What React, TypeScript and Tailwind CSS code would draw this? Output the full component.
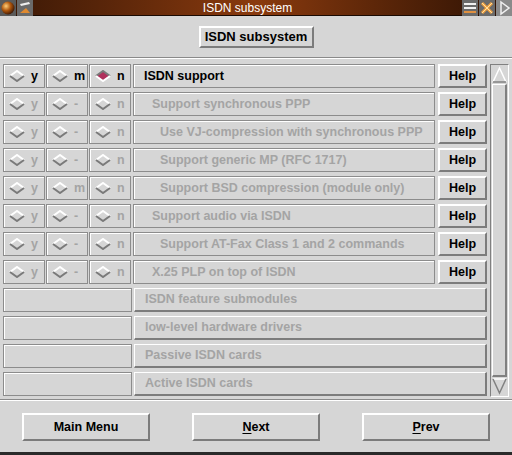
import React from "react";

const FONT = { fontFamily: '"Liberation Sans", Arial, Helvetica, sans-serif' };

interface Row {
  label: string;
  indent: number;
  enabled: boolean;
  m: string;
  value: "y" | "m" | "n";
}

const ROWS: Row[] = [
  { label: "ISDN support", indent: 10, enabled: true, m: "m", value: "n" },
  { label: "Support synchronous PPP", indent: 18, enabled: false, m: "-", value: "n" },
  { label: "Use VJ-compression with synchronous PPP", indent: 26, enabled: false, m: "-", value: "n" },
  { label: "Support generic MP (RFC 1717)", indent: 26, enabled: false, m: "-", value: "n" },
  { label: "Support BSD compression (module only)", indent: 26, enabled: false, m: "m", value: "n" },
  { label: "Support audio via ISDN", indent: 18, enabled: false, m: "-", value: "n" },
  { label: "Support AT-Fax Class 1 and 2 commands", indent: 26, enabled: false, m: "-", value: "n" },
  { label: "X.25 PLP on top of ISDN", indent: 18, enabled: false, m: "-", value: "n" },
];

const SUBMENUS = [
  "ISDN feature submodules",
  "low-level hardware drivers",
  "Passive ISDN cards",
  "Active ISDN cards",
];

const Diamond: React.FC<{ on: boolean }> = ({ on }) => (
  <svg width="16" height="12" viewBox="0 0 16 12" className="flex-shrink-0">
    <polygon points="8,1 15,6 8,11 1,6" fill={on ? "#b0305c" : "#d6d6d6"} />
    {on ? (
      <>
        <polyline points="1,6 8,1 15,6" fill="none" stroke="#7a7a7a" strokeWidth="2" />
        <polyline points="1,6 8,11 15,6" fill="none" stroke="#ffffff" strokeWidth="2" />
      </>
    ) : (
      <>
        <polyline points="1,6 8,1 15,6" fill="none" stroke="#ffffff" strokeWidth="2" />
        <polyline points="1,6 8,11 15,6" fill="none" stroke="#7a7a7a" strokeWidth="2" />
      </>
    )}
  </svg>
);

const RadioBox: React.FC<{ letter: string; on: boolean; enabled: boolean }> = ({ letter, on, enabled }) => (
  <div className="w-[42px] h-full flex items-center gap-[6px] pl-[5px] border border-[#8c8c8c] shadow-[inset_1px_1px_0_#ffffff]">
    <Diamond on={on} />
    <span className={`text-[12.5px] font-bold ${enabled ? "text-black" : "text-[#a4a4a4]"}`}>{letter}</span>
  </div>
);

const TitleBar: React.FC = () => (
  <div className="h-[16px] flex items-center bg-gradient-to-r from-[#3a1806] via-[#8a3a0e] to-[#2e1204] border-b border-[#1a0a02]">
    <svg width="16" height="16" viewBox="0 0 16 16" className="bg-[#5a5a5a]">
      <defs>
        <radialGradient id="ball" cx="0.35" cy="0.35" r="0.7">
          <stop offset="0" stopColor="#ffcf7a" />
          <stop offset="0.5" stopColor="#b0580e" />
          <stop offset="1" stopColor="#3a1604" />
        </radialGradient>
      </defs>
      <circle cx="8" cy="8" r="6.5" fill="url(#ball)" />
    </svg>
    <svg width="16" height="16" viewBox="0 0 16 16" className="bg-[#6a6a6a] ml-[1px]">
      <path d="M3 4 L12 2 L13 4 L4 6 Z" fill="#eeeeee" />
      <path d="M3 13 L9 8 L13 13 Z" fill="#e08a30" />
    </svg>
    <div className="flex-1 text-center text-white text-[12px] leading-none" style={FONT}>
      ISDN subsystem
    </div>
    <svg width="16" height="16" viewBox="0 0 16 16" className="bg-[#6a6a6a]">
      <rect x="2" y="3" width="12" height="2" fill="#f0f0f0" />
      <rect x="2" y="7" width="12" height="2" fill="#f0f0f0" />
      <rect x="2" y="11" width="12" height="2" fill="#e09040" />
    </svg>
    <svg width="16" height="16" viewBox="0 0 16 16" className="bg-[#6a6a6a] ml-[1px]">
      <path d="M3 3 L13 13 M13 3 L3 13" stroke="#f0a040" strokeWidth="3" />
      <path d="M3 3 L13 13 M13 3 L3 13" stroke="#ffe0a0" strokeWidth="1" />
    </svg>
    <svg width="16" height="16" viewBox="0 0 16 16" className="bg-[#8a8a8a] ml-[1px]">
      <path d="M5 2 L13 8 L5 14 Z" fill="none" stroke="#f0f0f0" strokeWidth="1.5" />
    </svg>
  </div>
);

const Scrollbar: React.FC = () => (
  <div className="w-[19px] h-full flex flex-col border border-[#808080] border-r-white border-b-white p-[1px]">
    <svg width="15" height="18" viewBox="0 0 15 18" className="flex-shrink-0">
      <polygon points="7.5,2 14,16 1,16" fill="#d6d6d6" />
      <polyline points="1,16 7.5,2 14,16" fill="none" stroke="#ffffff" strokeWidth="1.5" />
      <line x1="1" y1="16" x2="14" y2="16" stroke="#808080" strokeWidth="1.5" />
    </svg>
    <div className="flex-1 border border-white border-r-[#808080] border-b-[#808080] border-r-2 border-b-2" />
    <svg width="15" height="18" viewBox="0 0 15 18" className="flex-shrink-0">
      <polygon points="1,2 14,2 7.5,16" fill="#d6d6d6" />
      <line x1="1" y1="2" x2="14" y2="2" stroke="#ffffff" strokeWidth="1.5" />
      <polyline points="1,2 7.5,16 14,2" fill="none" stroke="#808080" strokeWidth="1.5" />
    </svg>
  </div>
);

const BottomButton: React.FC<{ label: string; accel?: boolean }> = ({ label, accel }) => (
  <div className="w-[128px] h-[28px] flex items-center justify-center border-2 border-t-white border-l-white border-r-[#7c7c7c] border-b-[#7c7c7c] text-[12.5px] font-bold text-black">
    {accel ? (
      <span>
        <span className="underline underline-offset-2">{label[0]}</span>
        {label.slice(1)}
      </span>
    ) : (
      label
    )}
  </div>
);

export default function App() {
  return (
    <div className="w-[512px] h-[455px] flex flex-col bg-[#d6d6d6] overflow-hidden" style={FONT}>
      <TitleBar />

      <div className="h-[42px] flex items-center justify-center border-b border-[#8a8a8a] pt-[1px]">
        <div className="w-[115px] h-[22px] flex items-center justify-center border-2 border-t-white border-l-white border-r-[#7c7c7c] border-b-[#7c7c7c] text-[13px] font-bold text-black">
          ISDN subsystem
        </div>
      </div>

      <div className="h-[342px] flex pl-[3px] pr-[3px] pt-[6px] pb-[2px] border-b border-[#8a8a8a] shadow-[inset_0_1px_0_#ffffff]">
        <div className="flex-1 flex flex-col gap-[4px]">
          {ROWS.map((r, i) => (
            <div key={i} className="h-[24px] flex">
              <RadioBox letter="y" on={r.enabled && r.value === "y"} enabled={r.enabled} />
              <div className="w-[1px]" />
              <RadioBox letter={r.m} on={r.enabled && r.value === "m"} enabled={r.enabled} />
              <div className="w-[1px]" />
              <RadioBox letter="n" on={r.enabled && r.value === "n"} enabled={r.enabled} />
              <div className="w-[2px]" />
              <div
                className={`w-[302px] h-full flex items-center border border-[#8c8c8c] shadow-[inset_1px_1px_0_#ffffff] text-[12.5px] font-bold whitespace-nowrap ${
                  r.enabled ? "text-black" : "text-[#a4a4a4]"
                }`}
                style={{ paddingLeft: r.indent }}
              >
                {r.label}
              </div>
              <div className="w-[3px]" />
              <div className="w-[49px] h-full flex items-center justify-center border-2 border-t-white border-l-white border-r-[#7c7c7c] border-b-[#7c7c7c] text-[12.5px] font-bold text-black">
                Help
              </div>
            </div>
          ))}
          {SUBMENUS.map((s) => (
            <div key={s} className="h-[24px] flex">
              <div className="w-[129px] h-full border border-[#8c8c8c] shadow-[inset_1px_1px_0_#ffffff]" />
              <div className="w-[2px]" />
              <div className="w-[353px] h-full flex items-center pl-[10px] border border-t-white border-l-white border-r-[#7c7c7c] border-b-[#7c7c7c] border-r-2 border-b-2 text-[12.5px] font-bold text-[#a4a4a4]">
                {s}
              </div>
            </div>
          ))}
        </div>
        <div className="w-[4px]" />
        <Scrollbar />
      </div>

      <div className="flex-1 flex items-center justify-between px-[22px] pt-[2px] shadow-[inset_0_1px_0_#ffffff]">
        <BottomButton label="Main Menu" />
        <BottomButton label="Next" accel />
        <BottomButton label="Prev" accel />
      </div>

      <div className="h-[3px] bg-[#2a2a2a]" />
    </div>
  );
}
